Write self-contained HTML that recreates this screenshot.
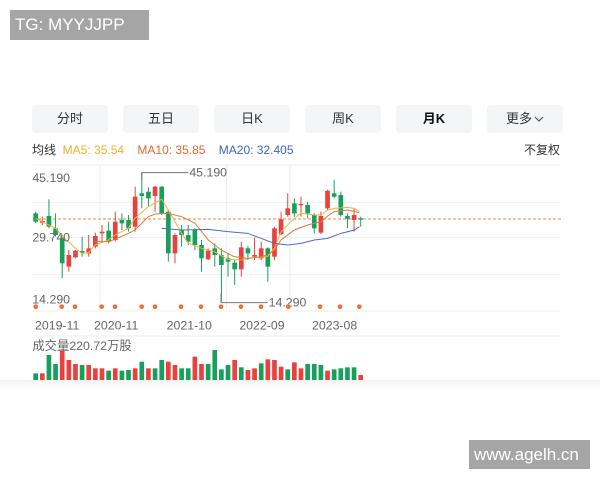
<!DOCTYPE html>
<html><head><meta charset="utf-8"><style>
body{margin:0;width:600px;height:480px;background:#fff;position:relative;overflow:hidden;font-family:"Liberation Sans","Noto Sans CJK SC",sans-serif}
.tab{position:absolute;top:105px;width:76px;height:28px;background:#f4f5f7;border-radius:4px;font-size:13px;color:#333;text-align:center;line-height:28px}
.wm{position:absolute;background:#a5a5a5;color:#fff}
</style></head><body>
<div class="wm" style="left:10px;top:10px;width:139px;height:30px;font-size:17px;line-height:30px;padding-left:5px;box-sizing:border-box">TG: MYYJJPP</div>
<div class="tab" style="left:32px">分时</div>
<div class="tab" style="left:123px">五日</div>
<div class="tab" style="left:214px">日K</div>
<div class="tab" style="left:305px">周K</div>
<div class="tab" style="left:396px;font-weight:bold;color:#111">月K</div>
<div class="tab" style="left:487px">更多<svg width="10" height="8" viewBox="0 0 10 8" style="margin-left:2px"><polyline points="1,2 5,6 9,2" fill="none" stroke="#555" stroke-width="1.2"/></svg></div>
<div style="position:absolute;top:141px;left:32px;font-size:12px;color:#333;white-space:nowrap">均线 &nbsp;<span style="color:#f0b030">MA5: 35.54</span> &nbsp;&nbsp;&nbsp;<span style="color:#e06a30">MA10: 35.85</span> &nbsp;&nbsp;&nbsp;<span style="color:#3a67c4">MA20: 32.405</span></div>
<div style="position:absolute;top:141px;left:524px;font-size:12px;color:#333">不复权</div>
<svg style="position:absolute;left:0;top:160px" width="600" height="230" viewBox="0 0 1800 690">
<g stroke="#eee" stroke-width="3">
<line x1="99" x2="1680" y1="15" y2="15"/><line x1="99" x2="1680" y1="127" y2="127"/><line x1="99" x2="1680" y1="233" y2="233"/><line x1="99" x2="1680" y1="343" y2="343"/><line x1="99" x2="1680" y1="453" y2="453"/><line x1="99" x2="1680" y1="528" y2="528"/>
<line x1="300" x2="300" y1="15" y2="453"/><line x1="680" x2="680" y1="15" y2="453"/><line x1="870" x2="870" y1="15" y2="453"/>
</g>
<line x1="99" x2="1685" y1="177" y2="177" stroke="#e58a4a" stroke-width="3" stroke-dasharray="9,6"/>
<g id="k"></g>
<polyline fill="none" stroke="#f0b43c" stroke-width="3" points="107,175 167,205 187,230 245,280 265,278 285,255 325,240 345,225 385,205 405,175 445,140 485,118 505,150 525,185 545,220 565,250 605,265 643,275 683,298 723,300 763,292 803,290 823,265 843,215 883,175 903,160 943,165 963,165 983,150 1003,145 1043,142 1063,145 1078,155"/>
<polyline fill="none" stroke="#e07b3a" stroke-width="3" points="285,245 325,245 345,238 385,220 405,210 445,170 465,162 505,160 545,170 585,190 625,240 663,270 703,290 743,295 783,290 803,285 823,270 843,240 883,210 923,195 963,185 983,168 1003,155 1043,150 1078,158"/>
<polyline fill="none" stroke="#4a6fc4" stroke-width="3" points="485,205 545,210 625,208 683,215 743,220 783,235 823,250 863,255 903,250 943,240 983,235 1023,220 1063,210 1078,200"/>
<polyline fill="none" stroke="#777" stroke-width="3" points="425,60 425,38 565,38"/>
<polyline fill="none" stroke="#777" stroke-width="3" points="663,400 663,428 803,428"/>
<g font-size="37" fill="#666" font-family="Liberation Sans">
<text x="568" y="50">45.190</text><text x="806" y="440">14.290</text>
<text x="97" y="66">45.190</text><text x="97" y="245">29.740</text><text x="97" y="430">14.290</text>
<text x="105" y="508">2019-11</text><text x="282" y="508">2020-11</text><text x="500" y="508">2021-10</text><text x="718" y="508">2022-09</text><text x="936" y="508">2023-08</text>
<text x="97" y="570">成交量220.72万股</text>
</g>
<g fill="#e8733a" id="d"></g>
</svg>
<div style="position:absolute;left:0;top:380px;width:600px;height:10px;background:linear-gradient(#f3f3f3,#fff)"></div>
<div class="wm" style="left:469px;top:440px;width:121px;height:29px;font-size:17px;line-height:29px;padding-left:5px;box-sizing:border-box;white-space:nowrap;overflow:hidden">www.agelh.cn</div>
<script>
var C=[["g",160,185,155,190],["r",183,188,170,195],["g",168,200,118,205],["g",205,225,160,230],["g",235,310,225,355],["r",285,320,270,335],["r",272,292,270,295],["g",273,278,230,290],["r",265,280,225,290],["r",228,260,218,265],["r",215,220,195,245],["g",212,245,185,250],["r",185,240,155,245],["g",180,190,160,210],["g",180,205,165,215],["r",110,200,80,215],["g",100,108,38,145],["g",95,115,82,140],["r",80,108,78,155],["g",80,160,78,165],["g",155,280,150,305],["r",225,280,220,310],["g",210,225,195,260],["g",225,245,195,255],["g",208,255,205,270],["g",255,295,240,335],["r",272,298,265,300],["g",265,285,250,320],["g",285,315,265,425],["g",295,305,280,350],["g",308,328,300,375],["r",262,328,245,350],["g",265,280,258,300],["r",285,290,232,300],["r",265,295,245,300],["g",265,320,262,365],["r",205,290,200,300],["r",178,222,155,225],["r",145,165,100,170],["g",130,160,115,170],["r",132,135,110,170],["g",135,160,125,175],["g",165,205,160,220],["r",168,218,155,222],["r",92,145,90,150],["g",100,110,60,115],["g",105,165,95,170],["g",168,176,160,205],["r",165,180,145,215],["g",175,178,170,200]];
var V=[640,640,585,612,572,600,612,615,615,625,625,632,625,632,630,625,605,625,625,600,605,615,625,625,590,612,612,570,628,615,600,622,630,625,610,598,600,620,628,607,625,612,612,615,632,628,625,622,622,645];
var VC="grggrrrgrrrgrggrgrggrrggrrggggrgrrgrrrgrrgggrggggrg";
var s="";
C.forEach(function(c,i){var x=107+19.9*i,col=c[0]=="r"?"#e8413e":"#17a05b";
s+='<line x1="'+x+'" x2="'+x+'" y1="'+c[3]+'" y2="'+c[4]+'" stroke="'+col+'" stroke-width="3"/>';
s+='<rect x="'+(x-7)+'" y="'+c[1]+'" width="14" height="'+Math.max(4,c[2]-c[1])+'" fill="'+col+'"/>';
var vc=VC[i]=="r"?"#e8413e":"#17a05b";
s+='<rect x="'+(x-7)+'" y="'+V[i]+'" width="14" height="'+(665-V[i])+'" fill="'+vc+'"/>';});
document.getElementById("k").innerHTML=s;
var d="";[107,185,225,305,345,425,465,543,603,663,723,783,865,960,1020,1078].forEach(function(x){d+='<circle cx="'+x+'" cy="440" r="7"/>';});
document.getElementById("d").innerHTML=d;
</script>
</body></html>
